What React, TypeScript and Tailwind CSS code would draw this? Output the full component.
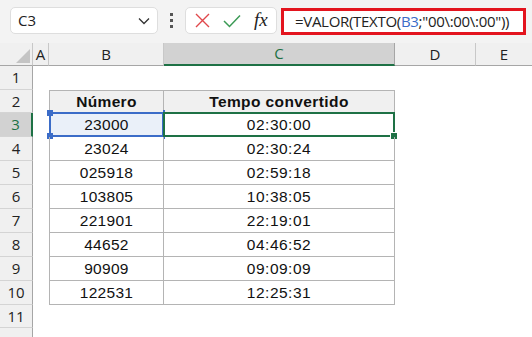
import React from "react";

const data: [string, string][] = [
  ["23000", "02:30:00"],
  ["23024", "02:30:24"],
  ["025918", "02:59:18"],
  ["103805", "10:38:05"],
  ["221901", "22:19:01"],
  ["44652", "04:46:52"],
  ["90909", "09:09:09"],
  ["122531", "12:25:31"],
];

function RowHead({ n, selected }: { n?: number; selected?: boolean }) {
  return (
    <div
      className={
        "w-[33px] shrink-0 flex items-center justify-center border-b border-b-[#d4d4d4] text-[15px] font-['Open_Sans'] " +
        (selected
          ? "bg-[#d2d2d2] text-[#1e7145] border-r-2 border-r-[#1e7145]"
          : "bg-[#f0f0f0] text-[#222] border-r border-r-[#a6a6a6]")
      }
    >
      {n}
    </div>
  );
}

export default function App() {
  return (
    <div className="w-[532px] h-[337px] overflow-hidden bg-white font-['Liberation_Sans'] text-[#111]">
      {/* toolbar */}
      <div className="h-[43px] bg-[#f3f3f3] flex items-start pt-[7px] pl-[10px]">
        <div className="w-[148px] h-[27px] bg-white border border-[#dedede] rounded-[5px] flex items-center justify-between pl-[7px] pr-[7px]">
          <span className="text-[15px] font-['Open_Sans'] text-[#222]">C3</span>
          <svg width="12" height="8" viewBox="0 0 12 8">
            <path d="M1 1.5 L6 6.5 L11 1.5" fill="none" stroke="#333" strokeWidth="1.3" />
          </svg>
        </div>
        <div className="w-[27px] h-[27px] flex flex-col items-center justify-center gap-[3px]">
          <div className="w-[3px] h-[3px] bg-[#555]" />
          <div className="w-[3px] h-[3px] bg-[#555]" />
          <div className="w-[3px] h-[3px] bg-[#555]" />
        </div>
        <div className="w-[92px] h-[27px] bg-white border border-[#dedede] rounded-[5px] flex items-center pl-[9px] gap-[13px]">
          <svg width="15" height="15" viewBox="0 0 15 15">
            <path d="M1 1 L14 14 M14 1 L1 14" stroke="#e0484b" strokeWidth="1.4" />
          </svg>
          <svg width="18" height="14" viewBox="0 0 18 14">
            <path d="M1 7 L6.5 12.5 L17 1.5" fill="none" stroke="#3b9a55" strokeWidth="1.5" />
          </svg>
          <span className="font-['Liberation_Serif'] italic text-[19px] leading-none text-[#222] -mt-[2px]">fx</span>
        </div>
        <div className="ml-[4px] mt-[1px] w-[245px] h-[27px] border-[3px] border-[#e3141e] bg-white flex items-center pl-[11px] text-[15px] font-['Open_Sans'] tracking-[-0.3px] text-[#222] whitespace-nowrap">
          =VALOR(TEXTO(<span className="text-[#3b6cc8]">B3</span>;"00\:00\:00"))
        </div>
      </div>

      {/* column headers */}
      <div className="flex h-[23px] bg-[#f0f0f0] text-[15px] font-['Open_Sans'] text-[#222]">
        <div className="w-[33px] shrink-0 border-r border-[#c8c8c8] border-b border-b-[#a6a6a6] relative">
          <svg className="absolute right-[2px] bottom-[2px]" width="14" height="14" viewBox="0 0 14 14">
            <path d="M14 0 L14 14 L0 14 Z" fill="#c4c4c4" />
          </svg>
        </div>
        <div className="w-[16px] shrink-0 border-r border-[#c8c8c8] border-b border-b-[#a6a6a6] flex items-center justify-center">A</div>
        <div className="w-[115px] shrink-0 border-r border-[#c8c8c8] border-b border-b-[#a6a6a6] flex items-center justify-center">B</div>
        <div className="w-[231px] shrink-0 bg-[#d2d2d2] border-r border-[#a6a6a6] border-b-2 border-b-[#1e7145] flex items-center justify-center text-[#1e7145]">C</div>
        <div className="w-[81px] shrink-0 border-r border-[#c8c8c8] border-b border-b-[#a6a6a6] flex items-center justify-center">D</div>
        <div className="flex-1 border-b border-b-[#a6a6a6] flex items-center justify-center">E</div>
      </div>

      {/* row 1 */}
      <div className="flex h-[24px]">
        <RowHead n={1} />
        <div className="flex-1" />
      </div>

      {/* row 2 header */}
      <div className="flex h-[23px]">
        <RowHead n={2} />
        <div className="w-[16px] shrink-0" />
        <div className="w-[115px] shrink-0 bg-[#f0f0f0] border border-[#b4b4b4] flex items-center justify-center font-bold text-[15.5px] tracking-[0.3px]">
          Número
        </div>
        <div className="w-[231px] shrink-0 bg-[#f0f0f0] border-y border-r border-[#b4b4b4] flex items-center justify-center font-bold text-[15.5px] tracking-[0.4px]">
          Tempo convertido
        </div>
      </div>

      {data.map(([a, b], i) => {
        const sel = i === 0;
        return (
          <div key={i} className="flex h-[24px]">
            <RowHead n={i + 3} selected={sel} />
            <div className="w-[16px] shrink-0" />
            <div
              className={
                "w-[115px] shrink-0 border-l border-r border-b border-[#b4b4b4] flex items-center justify-center text-[15.5px] tracking-[0.3px] relative " +
                (sel ? "bg-[#eaf0f9]" : "")
              }
            >
              {a}
              {sel && (
                <>
                  <div className="absolute -left-[1px] -top-[1px] -right-[1px] -bottom-[1px] border-2 border-[#3b6cc8]" />
                  <div className="absolute -left-[3px] -top-[3px] w-[6px] h-[6px] bg-[#3b6cc8]" />
                  <div className="absolute -left-[3px] -bottom-[3px] w-[6px] h-[6px] bg-[#3b6cc8]" />
                  <div className="absolute -right-[2px] -top-[3px] w-[2px] h-[6px] bg-[#3b6cc8]" />
                  <div className="absolute -right-[2px] -bottom-[3px] w-[2px] h-[6px] bg-[#3b6cc8]" />
                </>
              )}
            </div>
            <div className="w-[231px] shrink-0 border-r border-b border-[#b4b4b4] flex items-center justify-center text-[15.5px] tracking-[0.5px] relative">
              {b}
              {sel && (
                <>
                  <div className="absolute -left-[1px] -top-[1px] -right-[1px] -bottom-[1px] border-2 border-[#1e7145]" />
                  <div className="absolute -right-[4px] -bottom-[4px] w-[6px] h-[6px] bg-[#1e7145] border border-white box-content" />
                </>
              )}
            </div>
          </div>
        );
      })}

      {/* row 11, 12 */}
      <div className="flex h-[23px]">
        <RowHead n={11} />
        <div className="flex-1" />
      </div>
      <div className="flex h-[24px]">
        <RowHead />
        <div className="flex-1" />
      </div>
    </div>
  );
}
